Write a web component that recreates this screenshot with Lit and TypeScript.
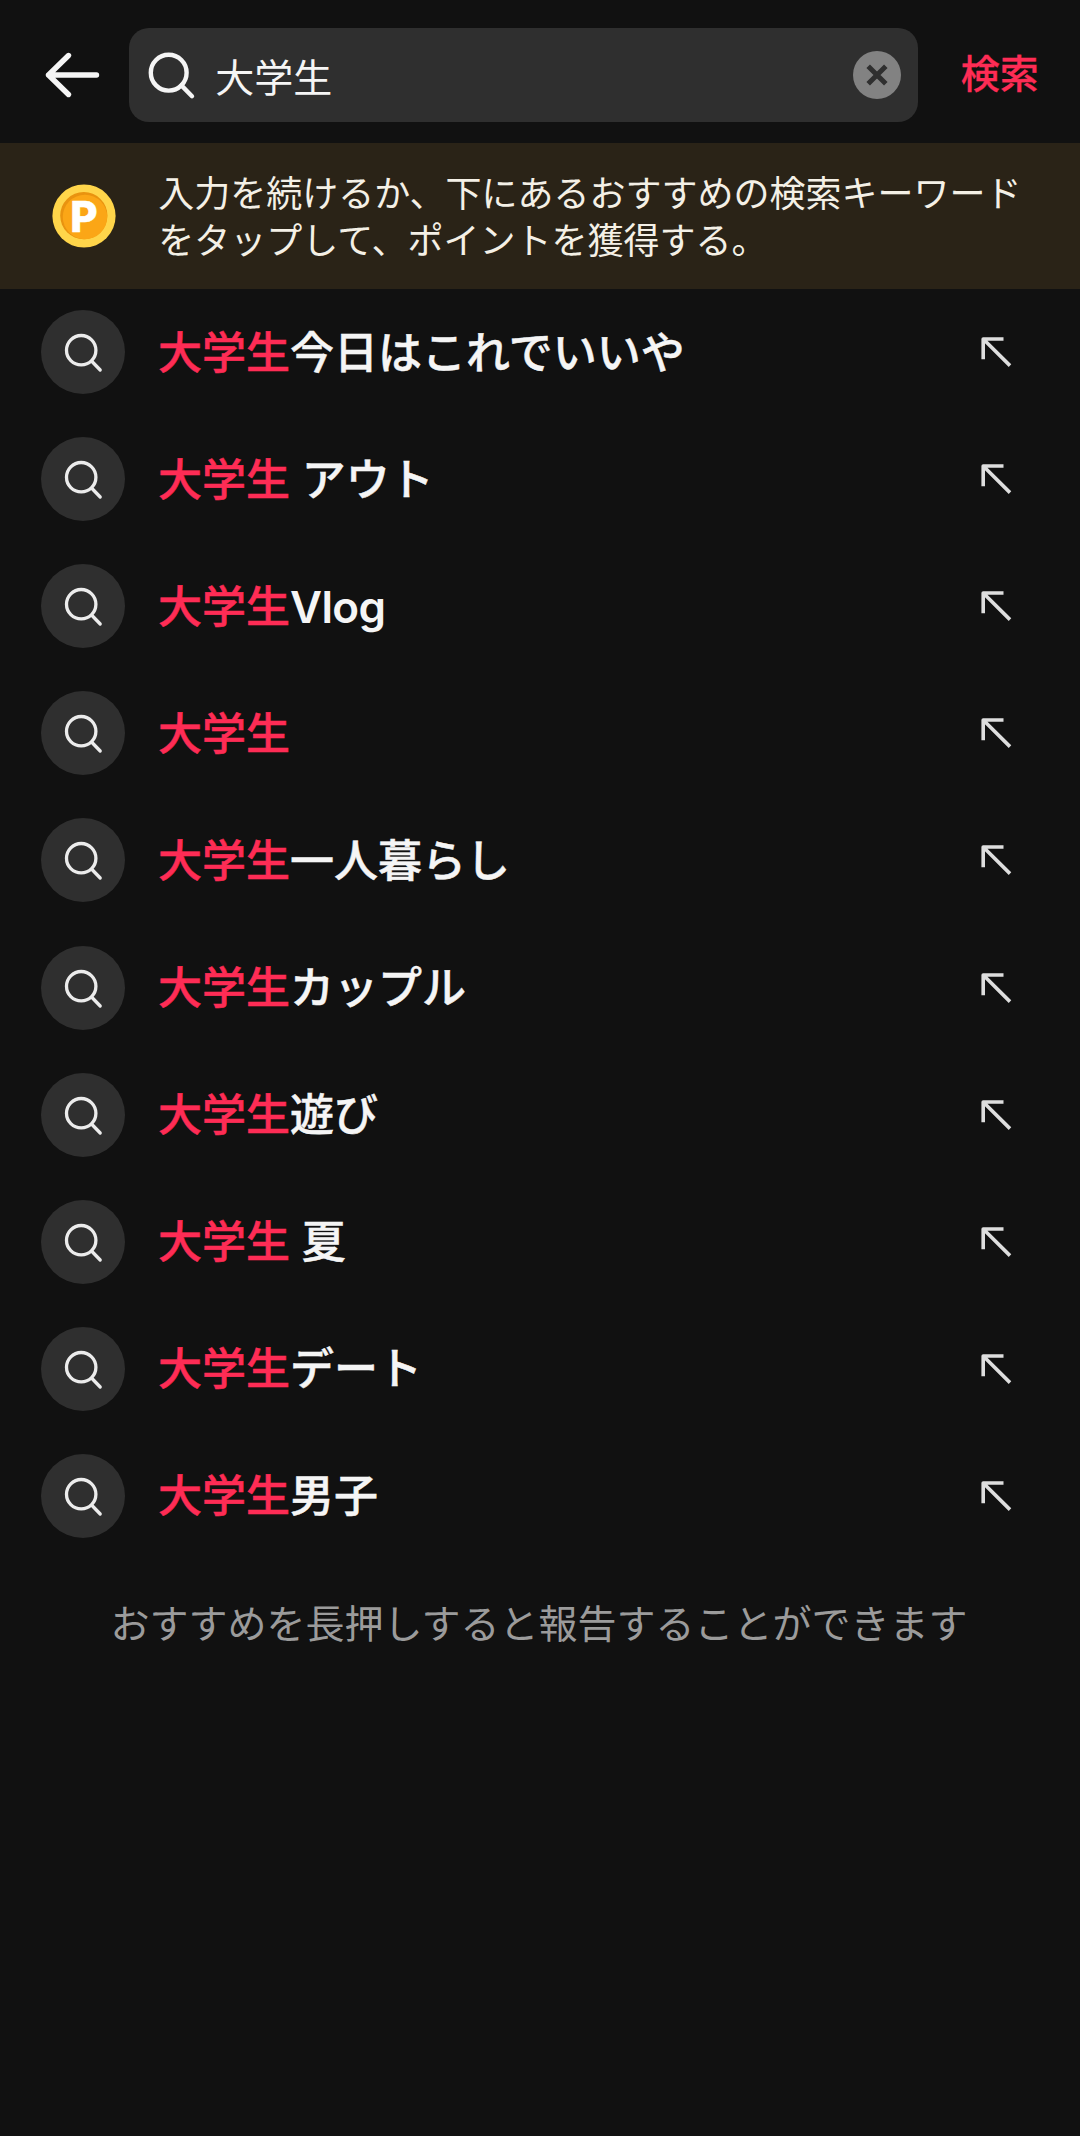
import { LitElement, html, css, svg } from "lit";
import { customElement, property, state } from "lit/decorators.js";

const KEYWORD = "大学生";
const SUGGESTIONS = [
  "今日はこれでいいや",
  " アウト",
  "Vlog",
  "",
  "一人暮らし",
  "カップル",
  "遊び",
  " 夏",
  "デート",
  "男子",
];

const magnifier = svg`
  <circle cx="18.3" cy="18.3" r="17.9"></circle>
  <path d="M31 31L41.6 41.8"></path>`;

@customElement("suggestion-row")
export class SuggestionRow extends LitElement {
  @property() keyword = "";
  @property() rest = "";

  static styles = css`
    :host {
      display: flex;
      align-items: center;
      height: 127.1px;
      padding: 0 64px 0 41.3px;
      box-sizing: border-box;
    }
    .badge {
      width: 84px;
      height: 84px;
      border-radius: 50%;
      background: #2f2f2f;
      flex: none;
    }
    .badge svg,
    .fill svg {
      display: block;
      fill: none;
      stroke: #ececec;
    }
    .text {
      flex: 1;
      margin: 1px 0 0 32.7px;
      font-family: Inter, "Noto Sans CJK JP", sans-serif;
      font-size: 44px;
      line-height: 64px;
      font-weight: 600;
      white-space: pre;
      color: #f5f5f5;
    }
    .hit {
      color: #fe2c55;
    }
    .cjk {
      font-weight: 500;
      -webkit-text-stroke: 0.5px currentColor;
    }
    .latin {
      letter-spacing: -0.6px;
    }
    .fill {
      flex: none;
    }
    .fill svg {
      stroke: #dedede;
    }
  `;

  render() {
    const latin = /^[A-Za-z]+$/.test(this.rest);
    return html`
      <div class="badge">
        <svg width="84" height="84" viewBox="0 0 84 84" stroke-width="3.3" stroke-linecap="round">
          <circle cx="40.2" cy="40.2" r="14.7"></circle>
          <path d="M51 51.5L59.2 60"></path>
        </svg>
      </div>
      <div class="text"><span class="hit cjk">${this.keyword}</span><span class=${latin ? "latin" : "cjk"}>${this.rest}</span></div>
      <div class="fill">
        <svg width="40" height="40" viewBox="0 0 40 40" stroke-width="3.6">
          <path d="M27.5 7H7.2V27.2M7.2 7L34 33.6" stroke-linejoin="round" stroke-linecap="butt"></path>
        </svg>
      </div>
    `;
  }
}

@customElement("app-root")
export class AppRoot extends LitElement {
  @state() private query = KEYWORD;

  static styles = css`
    :host {
      display: flex;
      flex-direction: column;
      min-height: 2136px;
      background: #111111;
      color: #f5f5f5;
      font-family: "Noto Sans CJK JP", sans-serif;
    }
    .bar {
      display: flex;
      align-items: center;
      height: 143px;
      padding: 0 41.3px 0 39.7px;
      box-sizing: border-box;
    }
    svg {
      display: block;
      fill: none;
      stroke: #f5f5f5;
      flex: none;
    }
    .field {
      display: flex;
      align-items: center;
      width: 789px;
      height: 94px;
      margin: 7px 0 0 25.6px;
      padding: 0 17px 0 19px;
      box-sizing: border-box;
      border-radius: 20px;
      background: #2f2f2f;
    }
    .back {
      margin-top: 6px;
    }
    .query {
      flex: 1;
      margin: -1px 0 0 17px;
      font-size: 39px;
      line-height: 58px;
    }
    .go {
      margin-left: auto;
      margin-top: -1px;
      font-size: 39px;
      line-height: 58px;
      font-weight: 500;
      color: #fe2c55;
      -webkit-text-stroke: 0.3px currentColor;
    }
    .tip {
      display: flex;
      align-items: center;
      height: 145.5px;
      padding-left: 51px;
      box-sizing: border-box;
      background: #2a2317;
    }
    .tip p {
      margin: 0 0 2px 41.3px;
      font-size: 36px;
      line-height: 47px;
      color: #f4f0e6;
      white-space: nowrap;
    }
    .coin text {
      font-family: Inter, sans-serif;
      font-weight: 800;
      font-size: 42px;
      fill: #ffffff;
      stroke: #ffffff;
      stroke-width: 0.5;
      stroke-linejoin: round;
    }
    .hint {
      margin: 33px 0 0;
      padding-right: 2px;
      text-align: center;
      font-size: 39px;
      line-height: 58px;
      color: #9b9b9b;
    }
  `;

  render() {
    return html`
      <header class="bar">
        <svg class="back" width="64" height="64" viewBox="0 0 64 64" stroke-width="5.4" stroke-linecap="round" stroke-linejoin="round">
          <path d="M28.5 12.5L8.5 32L28.5 51.5M8.5 32H56.5"></path>
        </svg>
        <div class="field">
          <svg width="50" height="50" viewBox="-2.4 -4.4 50 50" stroke-width="4.4" stroke-linecap="round">
            ${magnifier}
          </svg>
          <div class="query">${this.query}</div>
          <svg width="48" height="48" viewBox="0 0 48 48" stroke-width="5">
            <circle cx="24" cy="24" r="24" fill="#828282" stroke="none"></circle>
            <path d="M15.2 15.2L32.8 32.8M32.8 15.2L15.2 32.8" stroke="#2f2f2f"></path>
          </svg>
        </div>
        <div class="go">検索</div>
      </header>
      <section class="tip">
        <svg class="coin" width="66" height="66" viewBox="0 0 66 66">
          <circle cx="33" cy="33" r="31.6" fill="#ffd54a" stroke="none"></circle>
          <circle cx="32.8" cy="32.6" r="23.6" fill="#e9930f" stroke="none"></circle>
          <circle cx="34" cy="34" r="22.2" fill="#fba616" stroke="none"></circle>
          <text x="19.2" y="49.4">P</text>
        </svg>
        <p>入力を続けるか、下にあるおすすめの検索キーワード<br />をタップして、ポイントを獲得する。</p>
      </section>
      <main>
        ${SUGGESTIONS.map(
          (rest) => html`<suggestion-row .keyword=${KEYWORD} .rest=${rest}></suggestion-row>`
        )}
      </main>
      <p class="hint">おすすめを長押しすると報告することができます</p>
    `;
  }
}
